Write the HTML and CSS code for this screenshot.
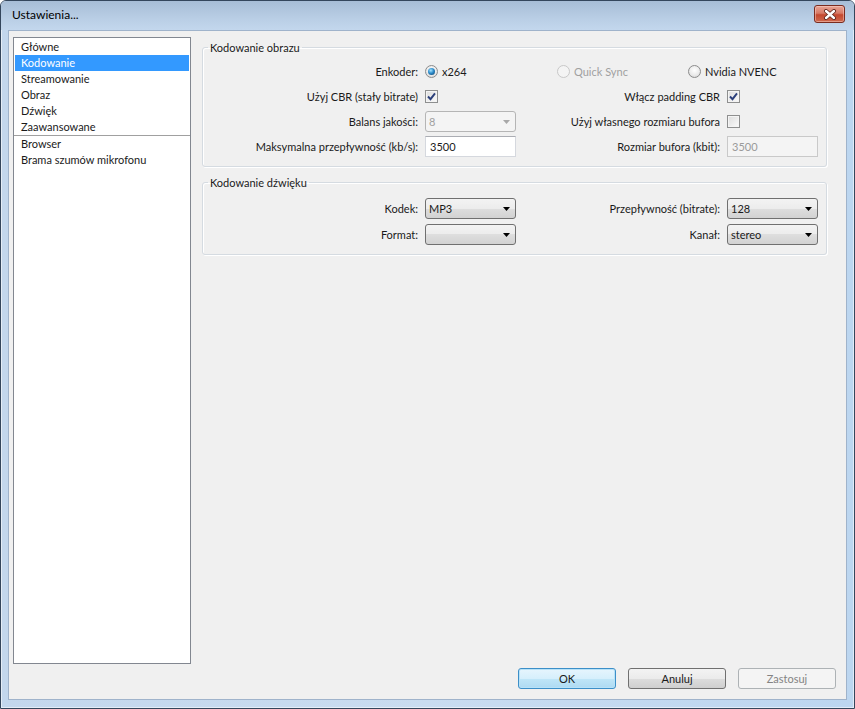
FILE: index.html
```html
<!DOCTYPE html>
<html lang="pl">
<head>
  <meta charset="UTF-8">
  <meta name="viewport" content="width=device-width, initial-scale=1.0">
  <title>Ustawienia...</title>
  <link rel="stylesheet" href="styles.css">
</head>
<body>
  <div class="window">
    <!-- Title bar -->
    <div class="titlebar">
      <span class="title">Ustawienia...</span>
      <button class="close-btn" type="button" aria-label="Zamknij">
        <svg width="14" height="11" viewBox="0 0 14 11">
          <path d="M3 2 L11 9 M11 2 L3 9" stroke="#5a2118" stroke-width="4" stroke-linecap="round" fill="none"/>
          <path d="M3 2 L11 9 M11 2 L3 9" stroke="#ffffff" stroke-width="2.4" stroke-linecap="round" fill="none"/>
        </svg>
      </button>
    </div>

    <div class="client">
      <div class="main">
        <!-- Section list -->
        <div class="nav-list">
          <div class="nav-item">Główne</div>
          <div class="nav-item selected">Kodowanie</div>
          <div class="nav-item">Streamowanie</div>
          <div class="nav-item">Obraz</div>
          <div class="nav-item">Dźwięk</div>
          <div class="nav-item">Zaawansowane</div>
          <div class="nav-sep"></div>
          <div class="nav-item">Browser</div>
          <div class="nav-item">Brama szumów mikrofonu</div>
        </div>

        <!-- Settings panel -->
        <div class="panel">
          <fieldset class="group">
            <legend>Kodowanie obrazu</legend>
            <div class="form-grid">
              <span class="label">Enkoder:</span>
              <div class="radio-row">
                <span class="radio-opt"><span class="radio checked"></span>x264</span>
                <span class="radio-opt disabled"><span class="radio"></span>Quick Sync</span>
                <span class="radio-opt"><span class="radio"></span>Nvidia NVENC</span>
              </div>

              <span class="label">Użyj CBR (stały bitrate)</span>
              <span class="checkbox">
                <svg width="11" height="11" viewBox="0 0 11 11"><path d="M2 5.5 L4.5 8.2 L9 2.3" stroke="#2b3f7a" stroke-width="1.9" fill="none"/></svg>
              </span>
              <span class="label">Włącz padding CBR</span>
              <span class="checkbox">
                <svg width="11" height="11" viewBox="0 0 11 11"><path d="M2 5.5 L4.5 8.2 L9 2.3" stroke="#2b3f7a" stroke-width="1.9" fill="none"/></svg>
              </span>

              <span class="label">Balans jakości:</span>
              <div class="combo disabled">
                <span>8</span>
                <svg width="7" height="4" viewBox="0 0 7 4"><path d="M0 0 H7 L3.5 4 Z"/></svg>
              </div>
              <span class="label">Użyj własnego rozmiaru bufora</span>
              <span class="checkbox"></span>

              <span class="label">Maksymalna przepływność (kb/s):</span>
              <div class="textbox">3500</div>
              <span class="label">Rozmiar bufora (kbit):</span>
              <div class="textbox disabled">3500</div>
            </div>
          </fieldset>

          <fieldset class="group audio">
            <legend>Kodowanie dźwięku</legend>
            <div class="form-grid">
              <span class="label">Kodek:</span>
              <div class="combo">
                <span>MP3</span>
                <svg width="7" height="4" viewBox="0 0 7 4"><path d="M0 0 H7 L3.5 4 Z"/></svg>
              </div>
              <span class="label">Przepływność (bitrate):</span>
              <div class="combo">
                <span>128</span>
                <svg width="7" height="4" viewBox="0 0 7 4"><path d="M0 0 H7 L3.5 4 Z"/></svg>
              </div>

              <span class="label">Format:</span>
              <div class="combo">
                <span></span>
                <svg width="7" height="4" viewBox="0 0 7 4"><path d="M0 0 H7 L3.5 4 Z"/></svg>
              </div>
              <span class="label">Kanał:</span>
              <div class="combo">
                <span>stereo</span>
                <svg width="7" height="4" viewBox="0 0 7 4"><path d="M0 0 H7 L3.5 4 Z"/></svg>
              </div>
            </div>
          </fieldset>
        </div>
      </div>

      <!-- Dialog buttons -->
      <div class="buttons">
        <button class="btn default" type="button">OK</button>
        <button class="btn" type="button">Anuluj</button>
        <button class="btn" type="button" disabled>Zastosuj</button>
      </div>
    </div>
  </div>
</body>
</html>
```

FILE: styles.css
```css
body {
  margin: 0;
  background-color: #ffffff;
  font-family: 'Lato', 'Liberation Sans', sans-serif;
  font-size: 11px;
  color: #1a1a1a;
}

/* Window frame */
.window {
  width: 855px;
  height: 709px;
  box-sizing: border-box;
  display: flex;
  flex-direction: column;
  border: 1px solid #34465c;
  border-radius: 6px 6px 0 0;
  background: linear-gradient(to right, #c3d7ed, #c9dcf0 50%, #bcd6f0);
  box-shadow: inset 0 0 0 1px rgba(255, 255, 255, 0.55);
  padding: 0 7px 8px 7px;
}

/* Title bar */
.titlebar {
  height: 29px;
  margin: 0 -7px;
  padding: 0 9px 0 11px;
  display: flex;
  align-items: center;
  justify-content: space-between;
  border-radius: 5px 5px 0 0;
  background: linear-gradient(#a7bdd6, #b9cee5 60%, #c3d7ed);
}

.title {
  margin-top: -2px;
  font-size: 12px;
  color: #000;
}

.close-btn {
  width: 31px;
  height: 18px;
  margin-top: -3px;
  padding: 0;
  display: flex;
  align-items: center;
  justify-content: center;
  border: 1px solid #7a2c20;
  border-radius: 3px;
  background: linear-gradient(#e8a596, #d77a66 45%, #c4482f 55%, #cf6a4f);
  box-shadow: inset 0 0 0 1px rgba(255, 220, 210, 0.45);
}

/* Client area */
.client {
  flex: 1;
  display: flex;
  flex-direction: column;
  background-color: #f0f0f0;
  border: 1px solid #9fb3cb;
  padding: 6px 10px 10px 4px;
}

.main {
  flex: 1;
  display: flex;
  min-height: 0;
}

/* Section list */
.nav-list {
  width: 178px;
  box-sizing: border-box;
  border: 1px solid #828790;
  background-color: white;
  padding: 1px;
}

.nav-item {
  height: 16px;
  line-height: 16px;
  padding-left: 6px;
  white-space: nowrap;
}

.nav-item.selected {
  background-color: #3399ff;
  color: white;
}

.nav-sep {
  height: 1px;
  margin: 0 -1px;
  background-color: #a0a0a0;
}

/* Settings panel */
.panel {
  width: 625px;
  margin-left: 11px;
  padding-top: 3px;
}

.group {
  margin: 0;
  padding: 6px 0 9px 0;
  border: 1px solid #d5dbe1;
  border-radius: 3px;
  box-shadow: inset 1px 1px 0 #ffffff, 1px 1px 0 #ffffff;
  min-inline-size: 0;
}

.group legend {
  margin-left: 5px;
  padding: 0 2px;
  line-height: 15px;
}

.group.audio {
  margin-top: 8px;
  padding-top: 8px;
}

.form-grid {
  display: grid;
  grid-template-columns: 215px 91px 197px 91px;
  grid-auto-rows: 21px;
  column-gap: 7px;
  row-gap: 4px;
  align-items: center;
}

.audio .form-grid {
  row-gap: 5px;
}

.label {
  justify-self: end;
  white-space: nowrap;
}

/* Radio buttons */
.radio-row {
  grid-column: 2 / 5;
  display: flex;
  align-items: center;
}

.radio-opt {
  display: flex;
  align-items: center;
  gap: 4px;
  white-space: nowrap;
}

.radio-opt:nth-child(1) { width: 132px; }
.radio-opt:nth-child(2) { width: 131px; }

.radio-opt.disabled {
  color: #a0a0a0;
}

.radio {
  width: 13px;
  height: 13px;
  box-sizing: border-box;
  border: 1px solid #8c8c8c;
  border-radius: 50%;
  background: radial-gradient(circle at 50% 40%, #ffffff 0, #ebebeb 55%, #cfcfcf 100%);
  position: relative;
}

.radio-opt.disabled .radio {
  border-color: #c8c8c8;
  background: #f4f4f4;
}

.radio.checked::after {
  content: '';
  position: absolute;
  left: 2px;
  top: 2px;
  width: 7px;
  height: 7px;
  border-radius: 50%;
  background: radial-gradient(circle at 40% 35%, #a6e4ff 0, #2d8ccb 45%, #0d3b63 100%);
}

/* Checkboxes */
.checkbox {
  width: 13px;
  height: 13px;
  box-sizing: border-box;
  display: flex;
  align-items: center;
  justify-content: center;
  border: 1px solid #8e8f8f;
  background: linear-gradient(135deg, #dcdcdc, #fbfbfb);
  box-shadow: inset 0 0 0 1px #f4f4f4;
}

/* Combo boxes */
.combo {
  height: 21px;
  box-sizing: border-box;
  display: flex;
  align-items: center;
  justify-content: space-between;
  padding: 0 5px 0 3px;
  border: 1px solid #707070;
  border-radius: 3px;
  background: linear-gradient(#f3f3f3, #ececec 50%, #dedede 50%, #d2d2d2);
}

.combo svg path {
  fill: #000;
}

.combo.disabled {
  border-color: #b5b5b5;
  background: #f4f4f4;
  color: #a0a0a0;
}

.combo.disabled svg path {
  fill: #a8a8a8;
}

/* Text boxes */
.textbox {
  height: 21px;
  box-sizing: border-box;
  display: flex;
  align-items: center;
  padding-left: 4px;
  background-color: white;
  border: 1px solid #d5d8de;
  border-top-color: #abadb3;
}

.textbox.disabled {
  background-color: #f4f4f4;
  color: #9a9a9a;
  border-color: #c9c9c9;
}

/* Dialog buttons */
.buttons {
  display: flex;
  justify-content: flex-end;
  gap: 12px;
  margin-top: 4px;
}

.btn {
  width: 98px;
  height: 21px;
  padding: 0;
  font-family: inherit;
  font-size: 11px;
  color: #1a1a1a;
  border: 1px solid #707070;
  border-radius: 3px;
  background: linear-gradient(#f3f3f3, #ebebeb 50%, #dddddd 50%, #cfcfcf);
}

.btn.default {
  border-color: #3c8fc8;
  background: linear-gradient(#e6f5fd, #d6effc 50%, #c0e6f8 50%, #aedaf2);
  box-shadow: inset 0 0 0 1px #b8e2f8;
}

.btn:disabled {
  border-color: #adb2b5;
  background: #f4f4f4;
  color: #838383;
}
```
